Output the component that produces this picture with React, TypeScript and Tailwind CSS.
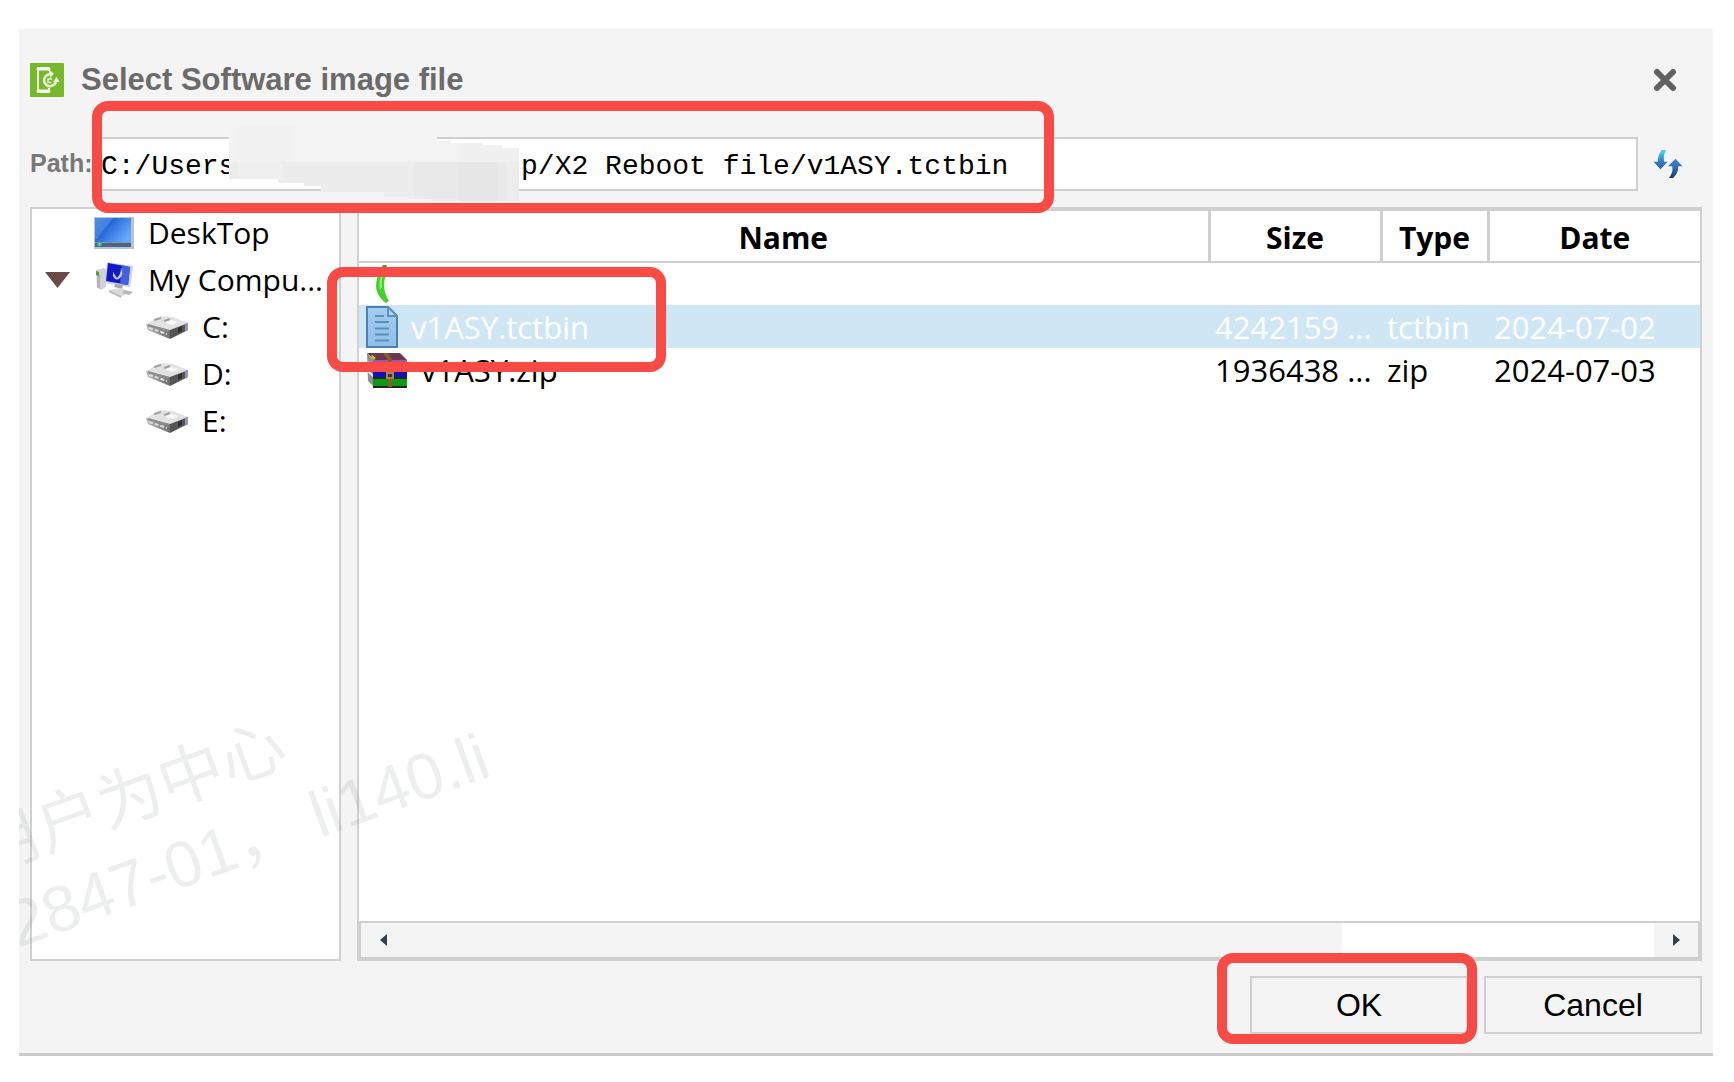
import { useState } from "react";

const FILES = [
  { name: "v1ASY.tctbin", size: "4242159 ...", type: "tctbin", date: "2024-07-02" },
  { name: "v1ASY.zip", size: "1936438 ...", type: "zip", date: "2024-07-03" },
];

const DRIVES = ["C:", "D:", "E:"];

function AppIcon() {
  return (
    <svg viewBox="0 0 34 34" className="size-[34px] shrink-0" fill="none" aria-hidden="true">
      <rect width="34" height="34" rx="1" fill="#76b82a" />
      <path d="M19 8V5H8v24h11v-4" stroke="#eef7e2" strokeWidth="2" strokeLinejoin="round" />
      <path d="M8 6h11M8 28h11" stroke="#f7fbf2" strokeWidth="3" strokeLinecap="round" />
      <path d="M21 10.500Q14 12 14 18Q16 24 21 23Q25 22 26 19" stroke="#e3f2d0" strokeWidth="2.500" />
      <path d="M19 7l5 3.500-4 4.500zM23 19l3.500-5 3 5z" fill="#f7fbf2" />
      <path d="M22 16h-4v3.500h3.500" stroke="#e3f2d0" strokeWidth="1.500" />
    </svg>
  );
}

function CloseIcon() {
  return (
    <svg viewBox="0 0 24 24" className="size-6" aria-hidden="true">
      <path d="M4 4l16 16M20 4L4 20" stroke="#606060" strokeWidth="6" strokeLinecap="round" />
    </svg>
  );
}

function RefreshIcon() {
  return (
    <svg viewBox="0 0 32 30" className="h-7 w-[30px]" aria-hidden="true">
      <defs>
        <linearGradient id="down" x1="0" y1="0" x2="0" y2="1">
          <stop offset="0" stopColor="#53d3ea" />
          <stop offset="0.6" stopColor="#2f7fc6" />
          <stop offset="1" stopColor="#2b62a8" />
        </linearGradient>
        <linearGradient id="up" x1="0" y1="0" x2="0" y2="1">
          <stop offset="0" stopColor="#3f86cf" />
          <stop offset="0.5" stopColor="#3468b5" />
          <stop offset="1" stopColor="#1d3564" />
        </linearGradient>
      </defs>
      <path d="M14 0H9.500Q5 5 5 12.500H0.500L8 20.500L15.500 12.500H12Q10.500 6 14 0Z" fill="url(#down)" />
      <path d="M17 30H21.500Q27 25 27 17.500H31.500L24 9.500L16 17.500H20.500Q22 24 17 30Z" fill="url(#up)" />
    </svg>
  );
}

function DesktopIcon() {
  return (
    <svg viewBox="0 0 40 32" className="h-8 w-10 shrink-0" aria-hidden="true">
      <defs>
        <linearGradient id="screen" x1="0" y1="0" x2="1" y2="0.600">
          <stop offset="0" stopColor="#3f84dd" />
          <stop offset="0.400" stopColor="#2468d9" />
          <stop offset="1" stopColor="#66aaf8" />
        </linearGradient>
      </defs>
      <rect width="40" height="32" fill="#b9c3d3" />
      <rect x="1" y="1" width="36" height="25" fill="url(#screen)" />
      <path d="M1 1h18L3 22H1z" fill="#6fa5e6" opacity="0.400" />
      <rect x="1" y="25" width="36" height="5" fill="#4d6482" />
      <rect x="1" y="25" width="36" height="1" fill="#7d96b5" />
      <circle cx="5.500" cy="27" r="2.500" fill="#3fae9a" />
      <circle cx="5.500" cy="27" r="1" fill="#b9dc62" />
    </svg>
  );
}

function ComputerIcon() {
  return (
    <svg viewBox="0 0 40 36" className="h-9 w-10 shrink-0" aria-hidden="true">
      <path d="M1 8l8-2 2 1v18l-5 3-4-3z" fill="#d2d2d2" />
      <path d="M2 11l3 1v15l-3-2z" fill="#b4b4b4" />
      <path d="M1 9l3 1v4l-3-1z" fill="#4aa038" />
      <path d="M12 0l26 4-3 21-26-4z" fill="#ccd0e6" />
      <path d="M13 1l22 4-2 18-22-4z" fill="#1218c4" />
      <path d="M27 3l8 2-2 18-8-1z" fill="#4460dc" />
      <path d="M18 10q2 3 4 6 4-4 4-10 3 6-1 10-4 4-7-2z" fill="#c4cef6" />
      <path d="M20 22l8 1-1 4-8-2z" fill="#a8a8a8" />
      <path d="M14 28l12-2 9 4-9 5z" fill="#dadada" />
      <path d="M14 28l12 6v2l-12-6zM29 28l9 2-4 3-7-2z" fill="#b8b8b8" />
    </svg>
  );
}

function DriveIcon() {
  return (
    <svg viewBox="0 0 44 24" className="h-6 w-11 shrink-0" aria-hidden="true">
      <defs>
        <linearGradient id="front" x1="0" y1="0" x2="1" y2="0">
          <stop offset="0" stopColor="#b8b8b8" />
          <stop offset="1" stopColor="#6e6e6e" />
        </linearGradient>
      </defs>
      <path d="M1 9L16 1l12 1 15 6-18 7z" fill="#e2e2e2" />
      <path d="M1 9l24 6v9L3 15z" fill="url(#front)" />
      <path d="M25 15l18-7v7l-18 9z" fill="#555555" />
      <path d="M3 10l21 6" stroke="#8c8c8c" strokeWidth="2" />
      <path d="M4 13l18 6" stroke="#dddddd" strokeWidth="2" strokeDasharray="4 2" />
      <path d="M9 5l7-2M19 6l6-2" stroke="#a0a0a0" strokeWidth="2" />
      <path d="M26 5l8 2-6 3-8-2z" fill="#f8f8f8" />
      <path d="M33 13l4-2v5l-4 2z" fill="#303030" />
      <path d="M40 9l3-1v7l-3 1z" fill="#9a92c4" />
    </svg>
  );
}

function UpIcon() {
  return (
    <svg viewBox="0 0 22 38" className="h-[38px] w-[22px]" aria-hidden="true">
      <path d="M5 5l3-5h3l3 5z" fill="#2fa81c" />
      <path d="M6 5Q-1 16 2 27Q5 34 11 38L14 36Q9 28 9 20Q9 12 14 6Z" fill="#45cf2c" />
      <path d="M7 8Q3 16 5 25L7 22Q6 15 9 9Z" fill="#86f56c" />
    </svg>
  );
}

function DocumentIcon() {
  return (
    <svg viewBox="0 0 32 42" className="h-[42px] w-8 shrink-0" aria-hidden="true">
      <defs>
        <linearGradient id="sheet" x1="0" y1="0" x2="0" y2="1">
          <stop offset="0" stopColor="#a4cdf0" />
          <stop offset="1" stopColor="#8fbfe9" />
        </linearGradient>
      </defs>
      <path d="M1 1h21l9 9v31H1z" fill="url(#sheet)" stroke="#4d80ae" strokeWidth="2" />
      <path d="M22 1v9h9z" fill="#b5d7f3" stroke="#5c8fbd" strokeWidth="2" />
      <path d="M9 10h9M9 16h14M9 22.500h14M9 28.500h14M9 34.500h14" stroke="#5d8fbb" strokeWidth="2" />
    </svg>
  );
}

function ArchiveIcon() {
  return (
    <svg viewBox="0 0 42 36" className="h-9 w-[42px] shrink-0" aria-hidden="true">
      <path d="M1 1h33l7 7H8z" fill="#6a3a4c" />
      <path d="M1 1l7 7v27l-6-6z" fill="#8f8f9d" />
      <path d="M2 10l6 6M2 19l6 6" stroke="#e8e8e8" strokeWidth="2" />
      <rect x="7" y="8" width="34" height="9" fill="#b04fa8" />
      <rect x="7" y="17" width="34" height="9" fill="#1212b8" />
      <rect x="7" y="26" width="34" height="9" fill="#0d9a12" />
      <path d="M7 17h34M7 26h34M7 35h34" stroke="#252525" strokeWidth="2" />
      <path d="M17 1h5l4 7v27h-4V8z" fill="#8a5a28" />
      <rect x="20" y="20" width="8" height="7" fill="#a88452" />
      <rect x="22" y="22" width="4" height="3" fill="#4a3220" />
      <path d="M5 4l4 3" stroke="#c9b422" strokeWidth="3" />
    </svg>
  );
}

// Pixelated patch that hides the user's folder names.
function Mosaic() {
  return (
    <svg
      viewBox="0 0 290 76"
      className="pointer-events-none absolute -top-[11px] left-[133px] h-[76px] w-[290px]"
      aria-hidden="true"
    >
      <path d="M0 0H140V6H208V15H222V17H253V19H273V22H290V36H0Z" fill="#f3f3f3" />
      <path d="M0 36H290V75H202V73H180V71H155V66H92V60H75V57H49V53H0Z" fill="#ececec" />
      <path d="M10 36h44v17H10z" fill="#efefef" />
      <path d="M185 36h45v37h-45zM268 36h10v39h-10z" fill="#e9e9e9" />
      <path d="M230 36h38v39h-38z" fill="#e6e6e6" />
      <path d="M10 0h52v36H10z" fill="#f1f1f1" />
      <path d="M230 17h23v2h20v3h17v14h-60z" fill="#f0f0f0" />
    </svg>
  );
}

function Watermark() {
  return (
    <div
      aria-hidden="true"
      className="pointer-events-none absolute inset-0 overflow-hidden whitespace-pre font-['Liberation_Sans','Noto_Sans_CJK_SC',sans-serif] text-[65px] leading-[80px] text-[#5f7070]/11"
    >
      <div className="absolute bottom-[162px] -left-[28px] origin-bottom-left -rotate-20">用户为中心</div>
      <div className="absolute bottom-[88px] left-[5px] origin-bottom-left -rotate-20">2847-01， li140.li</div>
    </div>
  );
}

const highlight = "pointer-events-none absolute z-10 rounded-2xl border-10 border-[#f84b46]";

export default function App() {
  const [path, setPath] = useState("C:/Users                 p/X2 Reboot file/v1ASY.tctbin");
  const [selected, setSelected] = useState("v1ASY.tctbin");

  return (
    <div className="flex min-h-screen bg-white pt-[29px] pr-[21px] pb-[26px] pl-[19px] font-['Open_Sans','Noto_Sans',sans-serif] text-[30px] text-black">
      <main className="relative flex min-w-0 flex-1 flex-col border-b-3 border-[#cccccc] bg-[#f4f4f4] px-[11px] pt-[34px] pb-[19px]">
        <header className="flex h-[34px] items-center">
          <AppIcon />
          <h1 className="ml-[17px] flex-1 font-['Liberation_Sans',sans-serif] text-[31px] leading-[34px] font-bold text-[#6b6b6b]">
            Select Software image file
          </h1>
          <button aria-label="Close" className="mr-[25px]">
            <CloseIcon />
          </button>
        </header>

        <div className="relative mt-10 flex h-[54px] items-center">
          <label
            htmlFor="path"
            className="w-[66px] shrink-0 font-['Liberation_Sans',sans-serif] text-[25px] font-bold text-[#787878]"
          >
            Path:
          </label>
          <div className="relative flex-1 self-stretch">
            <input
              id="path"
              value={path}
              onChange={(e) => setPath(e.target.value)}
              spellCheck={false}
              className="size-full border-2 border-[#d0d0d0] bg-white pt-1 pl-[3px] font-['Liberation_Mono',monospace] text-[28px] outline-none"
            />
            <Mosaic />
          </div>
          <button aria-label="Refresh" className="mr-[19px] ml-[15px]">
            <RefreshIcon />
          </button>
          <div className={`${highlight} -top-9 left-[62px] h-[112px] w-[962px]`} />
        </div>

        <div className="mt-4 flex flex-1 gap-4">
          <nav className="w-[311px] shrink-0 border-2 border-[#d0d0d0] bg-white">
            <ul>
              <li className="flex h-[47px] items-center pl-[62px]">
                <DesktopIcon />
                <span className="ml-[14px]">DeskTop</span>
              </li>
              <li>
                <div className="flex h-[47px] items-center">
                  <button aria-label="Collapse My Computer" className="mr-[25px] ml-[13px]">
                    <svg viewBox="0 0 25 16" className="h-4 w-[25px]" aria-hidden="true">
                      <path d="M0 0h25L12.500 16z" fill="#6b4a47" />
                    </svg>
                  </button>
                  <ComputerIcon />
                  <span className="ml-[13px]">My Compu...</span>
                </div>
                <ul>
                  {DRIVES.map((drive) => (
                    <li key={drive} className="flex h-[47px] items-center pl-[113px]">
                      <DriveIcon />
                      <span className="ml-[13px]">{drive}</span>
                    </li>
                  ))}
                </ul>
              </li>
            </ul>
          </nav>

          <section className="relative flex min-w-0 flex-1 flex-col border-2 border-[#d0d0d0] bg-white">
            <table className="w-full table-fixed border-collapse">
              <colgroup>
                <col />
                <col className="w-[172px]" />
                <col className="w-[107px]" />
                <col className="w-[212px]" />
              </colgroup>
              <thead>
                <tr className="h-[52px] border-t-2 border-b-2 border-[#cfcfcf] leading-[46px]">
                  <th className="border-r-3 border-[#cfcfcf] pt-1">Name</th>
                  <th className="border-r-3 border-[#cfcfcf] pt-1">Size</th>
                  <th className="border-r-3 border-[#cfcfcf] pt-1">Type</th>
                  <th className="pt-1">Date</th>
                </tr>
              </thead>
              <tbody className="text-[31px] leading-[42px]">
                <tr className="h-[43px]">
                  <td colSpan={4} className="pl-4">
                    <button aria-label="Up one level" className="block">
                      <UpIcon />
                    </button>
                  </td>
                </tr>
                {FILES.map((file) => (
                  <tr
                    key={file.name}
                    onClick={() => setSelected(file.name)}
                    className={file.name === selected ? "h-[43px] bg-[#cfe7f5] text-white" : "h-[43px]"}
                  >
                    <td className="pl-[7px]">
                      <div className="flex h-[43px] items-center gap-[13px]">
                        {file.type === "zip" ? <ArchiveIcon /> : <DocumentIcon />}
                        {file.name}
                      </div>
                    </td>
                    <td className="pl-[6px] whitespace-nowrap">{file.size}</td>
                    <td className="pl-[6px]">{file.type}</td>
                    <td className="pl-[6px]">{file.date}</td>
                  </tr>
                ))}
              </tbody>
            </table>

            <div className="mt-auto flex h-[38px] border-2 border-[#cfcfcf] bg-white">
              <button aria-label="Scroll left" className="flex w-11 items-center justify-center bg-[#f4f4f4]">
                <svg viewBox="0 0 7 12" className="h-3 w-[7px]" aria-hidden="true">
                  <path d="M7 0v12L0 6z" fill="#30404c" />
                </svg>
              </button>
              <div className="flex-1">
                <div className="h-full w-3/4 bg-[#f4f4f4]" />
              </div>
              <button aria-label="Scroll right" className="flex w-11 items-center justify-center bg-[#f4f4f4]">
                <svg viewBox="0 0 7 12" className="h-3 w-[7px]" aria-hidden="true">
                  <path d="M0 0v12l7-6z" fill="#30404c" />
                </svg>
              </button>
            </div>
            <div className={`${highlight} top-[58px] -left-8 h-[105px] w-[339px]`} />
          </section>
        </div>

        <footer className="mt-[15px] flex justify-end gap-4 font-['Liberation_Sans',sans-serif] text-[32px]">
          <div className="relative">
            <button className="h-[58px] w-[218px] border-2 border-[#d0d0d0]">OK</button>
            <div className={`${highlight} -top-[23px] -left-[33px] h-[91px] w-[260px]`} />
          </div>
          <button className="h-[58px] w-[218px] border-2 border-[#d0d0d0]">Cancel</button>
        </footer>

        <Watermark />
      </main>
    </div>
  );
}
